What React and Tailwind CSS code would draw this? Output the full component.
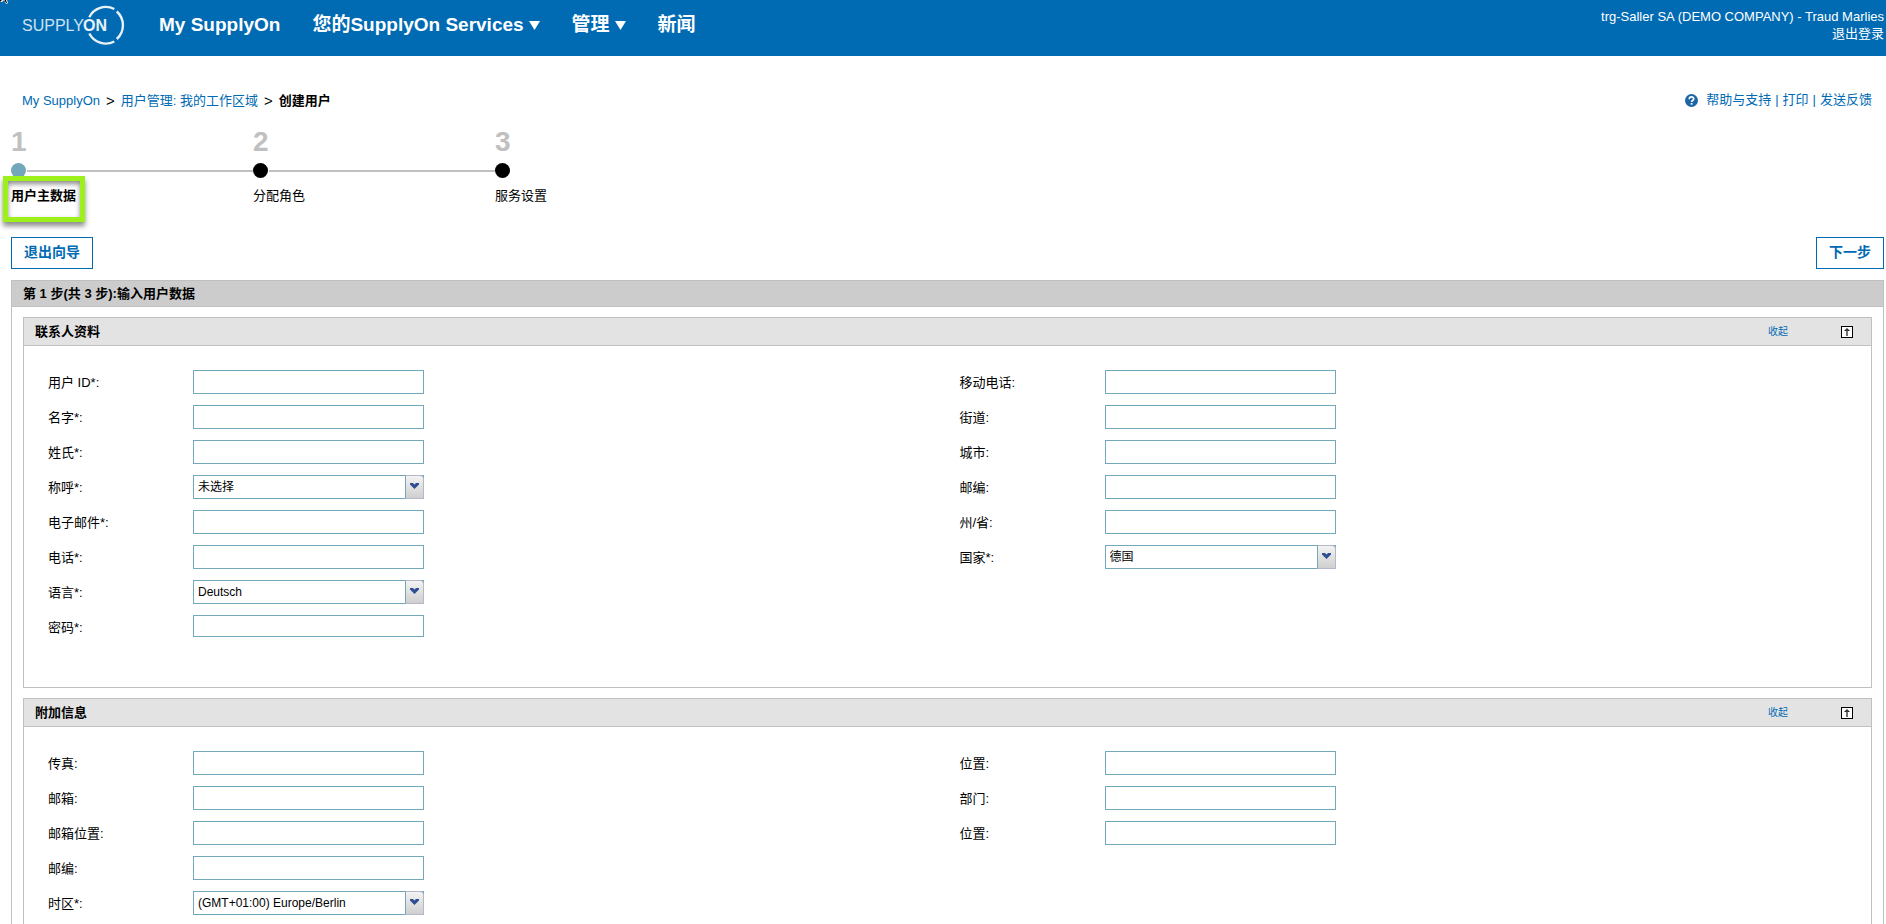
import React, { useState } from 'react';

const contactLeft = [
  { id: 'userId', label: '用户 ID*:' },
  { id: 'firstName', label: '名字*:' },
  { id: 'lastName', label: '姓氏*:' },
  { id: 'salutation', label: '称呼*:', options: ['未选择'] },
  { id: 'email', label: '电子邮件*:' },
  { id: 'phone', label: '电话*:' },
  { id: 'language', label: '语言*:', options: ['Deutsch'] },
  { id: 'password', label: '密码*:', type: 'password' },
];

const contactRight = [
  { id: 'mobile', label: '移动电话:' },
  { id: 'street', label: '街道:' },
  { id: 'city', label: '城市:' },
  { id: 'zip', label: '邮编:' },
  { id: 'state', label: '州/省:' },
  { id: 'country', label: '国家*:', options: ['德国'] },
];

const extraLeft = [
  { id: 'fax', label: '传真:' },
  { id: 'poBox', label: '邮箱:' },
  { id: 'poBoxCity', label: '邮箱位置:' },
  { id: 'poBoxZip', label: '邮编:' },
  { id: 'timezone', label: '时区*:', options: ['(GMT+01:00) Europe/Berlin'] },
];

const extraRight = [
  { id: 'location', label: '位置:' },
  { id: 'department', label: '部门:' },
  { id: 'position', label: '位置:' },
];

const steps = [
  { number: 1, label: '用户主数据' },
  { number: 2, label: '分配角色' },
  { number: 3, label: '服务设置' },
];

function Logo() {
  return (
    <svg width="104" height="42" viewBox="0 0 104 42" className="block" role="img" aria-label="SupplyOn">
      <g fill="none" stroke="#e8f2f9" strokeWidth="2.4">
        <path d="M67.3 13.200A18.500 18.500 0 0 1 92.300 5" />
        <path d="M94.800 7.500A18.500 18.500 0 0 1 94.800 35" />
        <path d="M92.300 37.500A18.500 18.500 0 0 1 67.300 29.500" />
      </g>
      <text x="0" y="27" fontSize="16" fill="#cfe3f2">SUPPLY</text>
      <text x="61" y="27" fontSize="16" fontWeight="bold" fill="#e8f2f9">ON</text>
    </svg>
  );
}

function Caret() {
  return (
    <svg width="11" height="9" viewBox="0 0 11 9" fill="#fff">
      <path d="M0 0H11L5.500 9Z" />
    </svg>
  );
}

function Header() {
  return (
    <header className="relative flex h-14 justify-between bg-[#006ab3] text-white">
      {/* tip of the mouse pointer in the corner */}
      <svg width="8" height="4" viewBox="0 0 8 4" className="absolute left-0 top-0">
        <path d="M0 0H7L8 3L6 4L4 0L2 2H0Z" fill="#fff" />
        <path d="M0 0H2L0 2ZM4.500 0H6L7 3H6Z" fill="#000" />
      </svg>
      <div className="flex">
        <a href="#" className="ml-[22px] mt-1"><Logo /></a>
        <nav className="ml-[33px] mt-[13px] flex h-6 items-center gap-8 text-[19px] font-bold leading-6">
          <a href="#">My SupplyOn</a>
          <a href="#" className="flex items-center gap-[5px]">您的SupplyOn Services <Caret /></a>
          <a href="#" className="flex items-center gap-[5px]">管理 <Caret /></a>
          <a href="#">新闻</a>
        </nav>
      </div>
      <div className="mr-0.5 mt-2 text-right text-[13px] leading-[17px]">
        <p>trg-Saller SA (DEMO COMPANY) - Traud Marlies</p>
        <a href="#">退出登录</a>
      </div>
    </header>
  );
}

function TopLinks() {
  return (
    <div className="flex h-6 items-center justify-between pl-[22px] pr-[14px] text-[13px]">
      <nav className="flex items-center gap-1.5 pt-0.5">
        <a href="#" className="text-[#006ab3]">My SupplyOn</a>
        <span className="text-[15px] leading-5">&gt;</span>
        <a href="#" className="text-[#006ab3]">用户管理: 我的工作区域</a>
        <span className="text-[15px] leading-5">&gt;</span>
        <span className="font-bold">创建用户</span>
      </nav>
      <div className="flex items-center gap-1 text-[#006ab3]">
        <svg width="13" height="13" viewBox="0 0 13 13" className="mr-1">
          <circle cx="6.500" cy="6.500" r="6.500" fill="#1d65a6" />
          <path d="M4.300 5.200C4.300 2.200 8.800 2.300 8.700 5C8.600 6.500 6.600 6.400 6.600 8" fill="none" stroke="#fff" strokeWidth="1.700" />
          <rect x="5.700" y="9" width="1.800" height="1.700" fill="#fff" />
        </svg>
        <a href="#">帮助与支持</a>
        <span>|</span>
        <a href="#">打印</a>
        <span>|</span>
        <a href="#">发送反馈</a>
      </div>
    </div>
  );
}

function Steps() {
  return (
    <ol className="mt-3.5 flex pl-[11px]">
      {steps.map((step, index) => (
        <li key={step.number} className="w-[242px]">
          <div className="text-[28px] font-bold leading-8 text-[#c0c0c0]">{step.number}</div>
          <div className="mt-[5px] flex items-center">
            <span className={`h-[15px] w-[15px] rounded-full ${index === 0 ? 'bg-[#73a7ba]' : 'bg-black'}`} />
            {index < steps.length - 1 && <span className="ml-px h-0.5 flex-1 bg-[#c0c0c0]" />}
          </div>
          <div className={`relative mt-2 w-fit text-[13px] leading-5 ${index === 0 ? 'font-bold' : ''}`}>
            {step.label}
            {index === 0 && (
              <span className="absolute -left-2 -top-2.5 h-[46px] w-[82px] border-[5px] border-[#9ef01a] shadow-[0_4px_5px_rgba(0,0,0,0.45),inset_0_3px_5px_rgba(0,0,0,0.45)]" />
            )}
          </div>
        </li>
      ))}
    </ol>
  );
}

function WizardButton({ children }) {
  return (
    <button type="button" className="h-8 cursor-pointer border border-[#006ab3] bg-white px-3 pb-0.5 text-[14px] font-bold text-[#006ab3]">
      {children}
    </button>
  );
}

function Field({ field }) {
  return (
    <div className="flex h-6 items-center">
      <label htmlFor={field.id} className="w-[145px] pt-0.5 text-[13px] leading-5">{field.label}</label>
      {field.options ? (
        <div className="relative h-6 w-[231px]">
          <select
            id={field.id}
            className="block h-6 w-full appearance-none rounded-none border border-[#73a7ba] bg-white pl-1 pr-5 text-[12px]"
          >
            {field.options.map(option => <option key={option}>{option}</option>)}
          </select>
          <span className="pointer-events-none absolute right-0 top-0 flex h-6 w-[19px] items-center justify-center rounded-tr-sm border border-[#b5b8c8] border-l-[#73a7ba] bg-linear-to-b from-[#f3f3f3] to-[#cfcfcf] pb-0.5">
            <svg width="9" height="6" viewBox="0 0 9 6">
              <path d="M0 0H3L4.500 1.500L6 0H9V1.500L4.500 6L0 1.500Z" fill="#2f4f93" />
            </svg>
          </span>
        </div>
      ) : (
        <input
          id={field.id}
          type={field.type || 'text'}
          className={`w-[231px] self-start border border-[#73a7ba] bg-white px-1 text-[12px] ${field.type === 'password' ? 'h-[22px]' : 'h-6'}`}
        />
      )}
    </div>
  );
}

function Panel({ title, left, right }) {
  const [open, setOpen] = useState(true);

  return (
    <section className="border border-[#c0c0c0]">
      <div className={`flex h-7 items-center justify-between bg-[#e3e3e3] pl-[11px] pr-[18px] ${open ? 'border-b border-[#c0c0c0]' : ''}`}>
        <h2 className="text-[13px] font-bold">{title}</h2>
        <div className="flex items-center gap-[53px]">
          <button type="button" onClick={() => setOpen(!open)} className="cursor-pointer text-[10px] text-[#006ab3]">
            收起
          </button>
          <a href="#" aria-label="返回顶部">
            <svg width="12" height="12" viewBox="0 0 12 12" className="block">
              <rect x="0.500" y="0.500" width="11" height="11" fill="#fff" stroke="#000" />
              <path d="M6 2L9 5H3Z" fill="#222" />
              <path d="M6 3V10" stroke="#444" strokeWidth="1.500" />
            </svg>
          </a>
        </div>
      </div>
      {open && (
        <div className="grid grid-cols-2 pb-12 pl-6 pt-6">
          {[left, right].map((fields, index) => (
            <div key={index} className="flex flex-col gap-[11px]">
              {fields.map(field => <Field key={field.id} field={field} />)}
            </div>
          ))}
        </div>
      )}
    </section>
  );
}

function App() {
  return (
    <div className="bg-white font-['Liberation_Sans','Noto_Sans_CJK_SC',sans-serif] text-black">
      <Header />
      <main className="pt-8">
        <TopLinks />
        <Steps />
        <div className="mt-[31px] flex justify-between pl-[11px] pr-0.5">
          <WizardButton>退出向导</WizardButton>
          <WizardButton>下一步</WizardButton>
        </div>
        <div className="ml-[11px] mr-0.5 mt-[11px] border border-[#c0c0c0]">
          <h1 className="flex h-[26px] items-center border-b border-[#c0c0c0] bg-[#ccc] pl-[11px] text-[13px] font-bold">
            第 1 步(共 3 步):输入用户数据
          </h1>
          <form className="flex flex-col gap-2.5 px-[11px] py-2.5">
            <Panel title="联系人资料" left={contactLeft} right={contactRight} />
            <Panel title="附加信息" left={extraLeft} right={extraRight} />
          </form>
        </div>
      </main>
    </div>
  );
}

export default App;
